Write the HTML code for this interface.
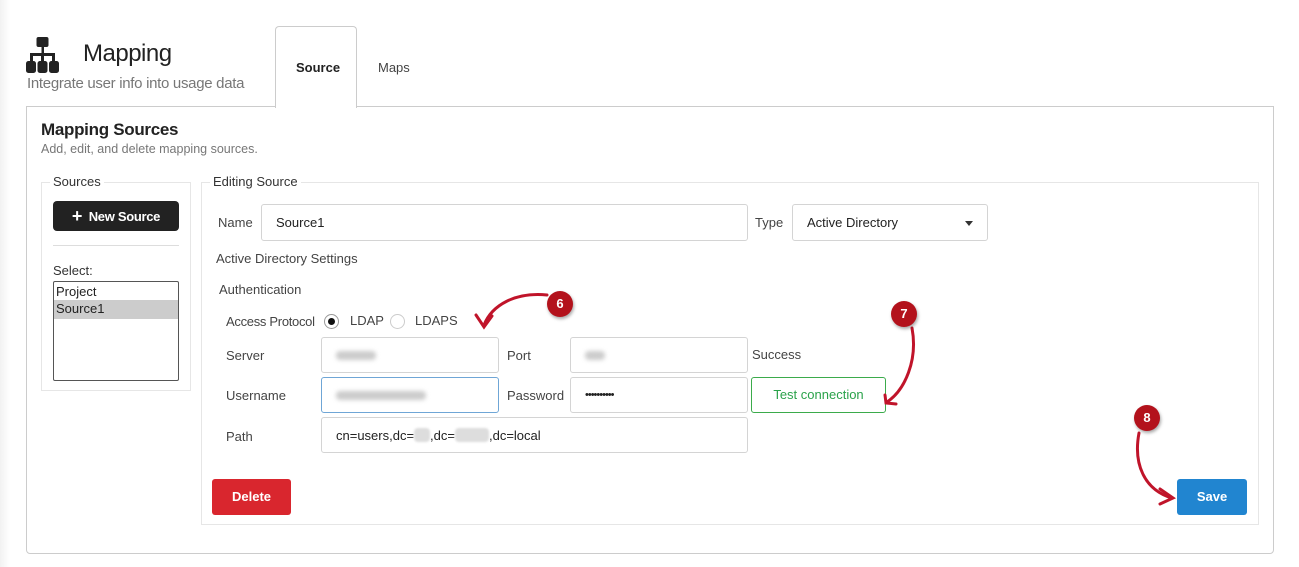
<!DOCTYPE html>
<html><head><style>
*{box-sizing:border-box;margin:0;padding:0}
body{width:1299px;height:567px;background:#fff;font-family:"Liberation Sans",sans-serif;position:relative;overflow:hidden;color:#333}
.a{position:absolute}
.t{font-size:13px;color:#444;white-space:nowrap}
.in{position:absolute;border:1px solid #d4d4d4;border-radius:3px;background:#fff;font-size:13px;color:#222;padding-left:14px;display:flex;align-items:center}
.blur{display:inline-block;height:9px;background:#ccc;border-radius:4px;filter:blur(2px)}
.badge{position:absolute;width:26px;height:26px;border-radius:50%;background:#b3121c;color:#fff;font-weight:bold;font-size:13px;text-align:center;line-height:26px;box-shadow:1px 2px 3px rgba(0,0,0,.35)}
</style></head><body>
<div class="a" style="left:0;top:0;width:10px;height:567px;background:linear-gradient(90deg,#f2f2f2,#fff)"></div>
<svg class="a" style="left:26px;top:37px" width="33" height="37" viewBox="0 0 33 37">
<rect x="10.5" y="0" width="12" height="10" rx="2" fill="#222"/>
<rect x="15.5" y="9" width="2.5" height="8" fill="#222"/>
<rect x="4" y="16" width="25" height="3" fill="#222"/>
<rect x="4" y="16" width="3" height="9" fill="#222"/><rect x="15" y="16" width="3" height="9" fill="#222"/><rect x="26" y="16" width="3" height="9" fill="#222"/>
<rect x="0" y="24" width="10" height="12" rx="2.5" fill="#222"/><rect x="11.5" y="24" width="10" height="12" rx="2.5" fill="#222"/><rect x="23" y="24" width="10" height="12" rx="2.5" fill="#222"/>
</svg>
<div class="a" style="left:83px;top:40px;font-size:24px;color:#222;letter-spacing:-0.5px">Mapping</div>
<div class="a" style="left:27px;top:75px;font-size:15px;color:#777;letter-spacing:-0.3px">Integrate user info into usage data</div>
<div class="a" style="left:26px;top:106px;width:1248px;height:448px;border:1px solid #ccc;border-radius:0 0 4px 4px"></div>
<div class="a" style="left:275px;top:26px;width:82px;height:82px;border:1px solid #ccc;border-bottom:none;border-radius:4px 4px 0 0;background:#fff"></div>
<div class="a" style="left:296px;top:60px;font-size:13px;font-weight:bold;color:#222">Source</div>
<div class="a" style="left:378px;top:60px;font-size:13px;color:#444">Maps</div>
<div class="a" style="left:41px;top:120px;font-size:17px;font-weight:bold;color:#222;letter-spacing:-0.3px">Mapping Sources</div>
<div class="a" style="left:41px;top:142px;font-size:12.5px;color:#777">Add, edit, and delete mapping sources.</div>
<div class="a" style="left:41px;top:182px;width:150px;height:209px;border:1px solid #e6e6e6"></div>
<div class="a t" style="left:50px;top:174px;background:#fff;padding:0 3px;color:#333">Sources</div>
<div class="a" style="left:53px;top:201px;width:126px;height:30px;background:#222;border-radius:4px;color:#fff;font-weight:bold;font-size:13px;line-height:30px;text-align:center;letter-spacing:-0.3px"><span style="font-size:18px;vertical-align:-1px">+</span>&nbsp; New Source</div>
<div class="a" style="left:53px;top:245px;width:126px;height:1px;background:#ddd"></div>
<div class="a t" style="left:53px;top:263px;color:#333">Select:</div>
<div class="a" style="left:53px;top:281px;width:126px;height:100px;border:1px solid #555;border-radius:2px;font-size:13px;color:#222">
<div style="padding:2px 2px;height:18px">Project</div><div style="padding:1px 2px;height:19px;background:#ccc">Source1</div></div>
<div class="a" style="left:201px;top:182px;width:1058px;height:343px;border:1px solid #e6e6e6"></div>
<div class="a t" style="left:210px;top:174px;background:#fff;padding:0 3px;color:#333">Editing Source</div>
<div class="a t" style="left:218px;top:215px">Name</div>
<div class="in" style="left:261px;top:204px;width:487px;height:37px">Source1</div>
<div class="a t" style="left:755px;top:215px">Type</div>
<div class="in" style="left:792px;top:204px;width:196px;height:37px">Active Directory<span style="position:absolute;right:14px;top:16px;border:4px solid transparent;border-top:5px solid #333;border-bottom:none"></span></div>
<div class="a t" style="left:216px;top:251px">Active Directory Settings</div>
<div class="a t" style="left:219px;top:282px">Authentication</div>
<div class="a t" style="left:226px;top:314px;letter-spacing:-0.3px">Access Protocol</div>
<div class="a" style="left:324px;top:314px;width:15px;height:15px;border:1px solid #999;border-radius:50%"><div style="width:7px;height:7px;background:#111;border-radius:50%;margin:3px"></div></div>
<div class="a t" style="left:350px;top:313px">LDAP</div>
<div class="a" style="left:390px;top:314px;width:15px;height:15px;border:1px solid #ccc;border-radius:50%"></div>
<div class="a t" style="left:415px;top:313px">LDAPS</div>
<div class="a t" style="left:226px;top:348px">Server</div>
<div class="in" style="left:321px;top:337px;width:178px;height:36px"><span class="blur" style="width:40px"></span></div>
<div class="a t" style="left:507px;top:348px">Port</div>
<div class="in" style="left:570px;top:337px;width:178px;height:36px"><span class="blur" style="width:20px"></span></div>
<div class="a t" style="left:752px;top:347px">Success</div>
<div class="a t" style="left:226px;top:388px">Username</div>
<div class="in" style="left:321px;top:377px;width:178px;height:36px;border-color:#6fa6d6"><span class="blur" style="width:90px"></span></div>
<div class="a t" style="left:507px;top:388px">Password</div>
<div class="in" style="left:570px;top:377px;width:178px;height:36px;font-size:11px;letter-spacing:-1px">••••••••••</div>
<div class="a" style="left:751px;top:377px;width:135px;height:36px;border:1px solid #3bab4b;border-radius:3px;color:#2aa24a;font-size:13px;line-height:34px;text-align:center">Test connection</div>
<div class="a t" style="left:226px;top:429px">Path</div>
<div class="in" style="left:321px;top:417px;width:427px;height:36px">cn=users,dc=<span class="blur" style="width:16px;height:14px;filter:blur(1px);background:#ddd"></span>,dc=<span class="blur" style="width:34px;height:14px;filter:blur(1px);background:#ddd"></span>,dc=local</div>
<div class="a" style="left:212px;top:479px;width:79px;height:36px;background:#d9262e;border-radius:3px;color:#fff;font-weight:bold;font-size:13px;line-height:36px;text-align:center">Delete</div>
<div class="a" style="left:1177px;top:479px;width:70px;height:36px;background:#2185d0;border-radius:3px;color:#fff;font-weight:bold;font-size:13px;line-height:36px;text-align:center">Save</div>
<svg class="a" style="left:0;top:0" width="1299" height="567">
<g fill="none" stroke="#c0142a" stroke-width="3" stroke-linecap="round">
<path d="M547 295 C515 292 492 305 484 325"/>
<path d="M476 315 L484 327 L492 316"/>
<path d="M912 328 C918 360 905 390 887 402"/>
<path d="M885 395 L886 403 L896 404"/>
<path d="M1139 433 C1133 465 1145 490 1172 498"/>
<path d="M1160 489 L1173 498 L1160 504"/>
</g></svg>
<div class="badge" style="left:547px;top:291px">6</div>
<div class="badge" style="left:891px;top:301px">7</div>
<div class="badge" style="left:1134px;top:405px">8</div>
</body></html>
